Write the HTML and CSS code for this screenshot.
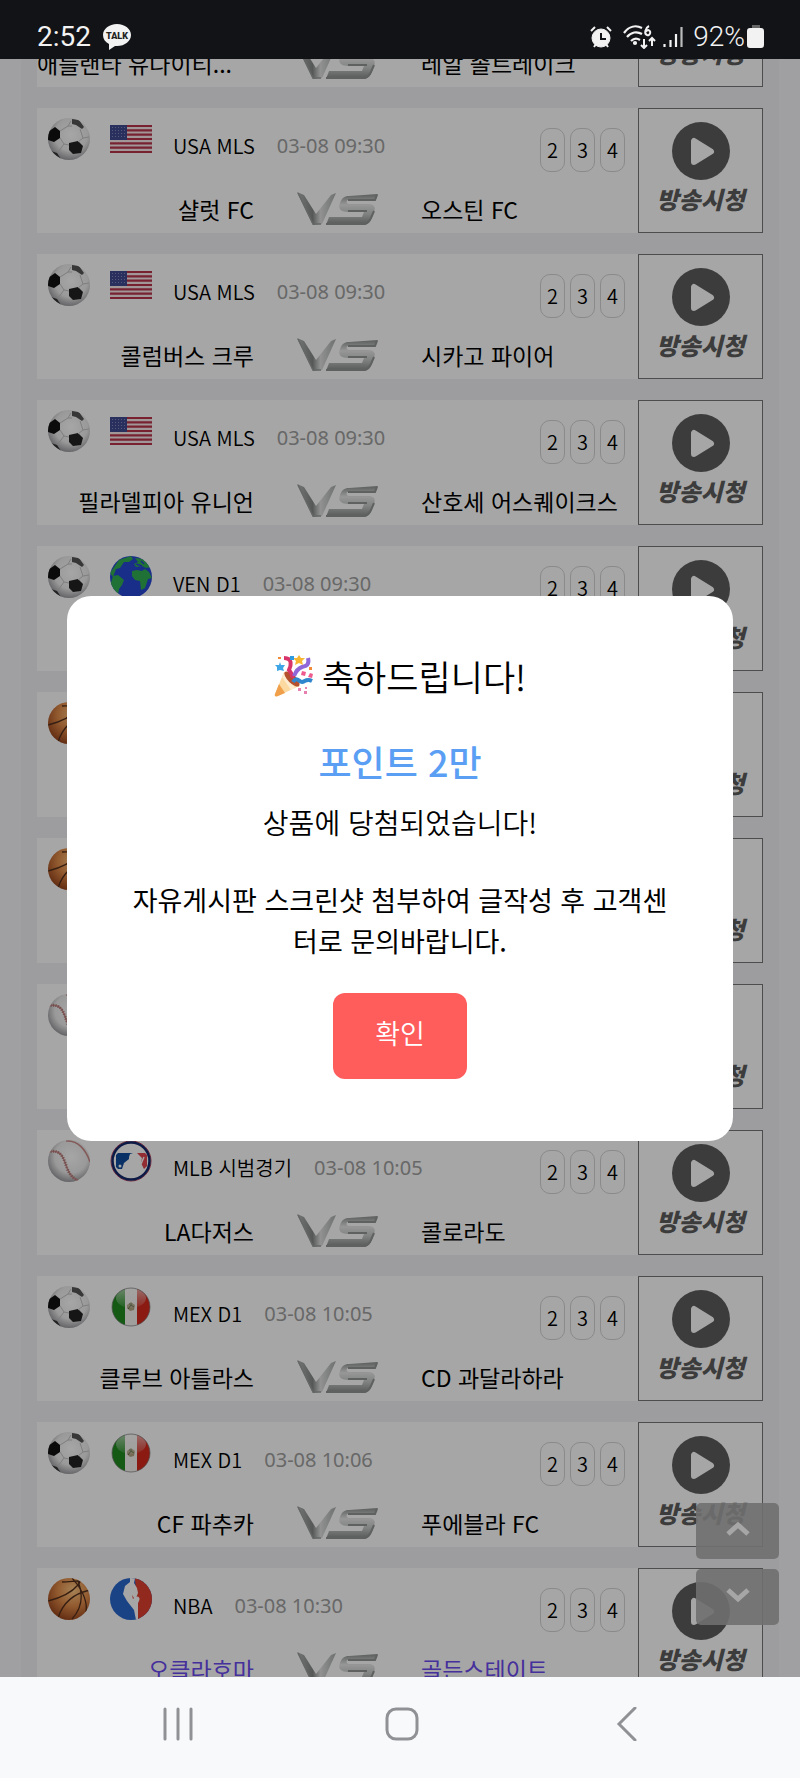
FILE: index.html
```html
<!DOCTYPE html>
<html lang="ko">
  <head>
    <meta charset="UTF-8" />
    <meta name="viewport" content="width=device-width, initial-scale=1.0" />
    <title>경기 목록</title>
    <link rel="stylesheet" href="styles.css" />
  </head>
  <body>
    <svg class="sprite" aria-hidden="true">
      <defs>
        <radialGradient id="g-white" cx="55%" cy="40%" r="65%">
          <stop offset="0" stop-color="#fff" />
          <stop offset="0.6" stop-color="#ececec" />
          <stop offset="1" stop-color="#8c8c92" />
        </radialGradient>
        <radialGradient id="g-orange" cx="60%" cy="30%" r="75%">
          <stop offset="0" stop-color="#ffc983" />
          <stop offset="0.5" stop-color="#e08a48" />
          <stop offset="1" stop-color="#93401a" />
        </radialGradient>
        <linearGradient id="g-vs" x1="0" y1="0" x2="0" y2="1">
          <stop offset="0" stop-color="#8b8e8e" />
          <stop offset="0.35" stop-color="#e8e8e8" />
          <stop offset="0.65" stop-color="#c4c6c6" />
          <stop offset="1" stop-color="#858888" />
        </linearGradient>
        <linearGradient id="g-v" x1="0" y1="0" x2="1" y2="0">
          <stop offset="0" stop-color="#b3b6b6" />
          <stop offset="0.4" stop-color="#858888" />
          <stop offset="0.6" stop-color="#e0e0e0" />
          <stop offset="1" stop-color="#a9acac" />
        </linearGradient>
        <linearGradient id="g-shine" x1="0" y1="0" x2="0" y2="1">
          <stop offset="0" stop-color="#fff" stop-opacity="0.6" />
          <stop offset="1" stop-color="#fff" stop-opacity="0.1" />
        </linearGradient>
        <clipPath id="c-ball"><circle cx="21" cy="21" r="21" /></clipPath>
        <clipPath id="c-small"><circle cx="21" cy="21" r="19" /></clipPath>
      </defs>
      <symbol id="soccer" viewBox="0 0 42 42">
        <g clip-path="url(#c-ball)">
          <rect width="42" height="42" fill="url(#g-white)" />
          <path d="M24 1l7 1 5 7-2 2-6-4-4-1z" fill="#555" />
          <path d="M0 14l7-5 5 4 0 7-6 4-6-2z" fill="#111" />
          <path d="M21 25l9-2 5 5-2 7-8 1-4-4z" fill="#222" />
          <path d="M3 33l6 2 4 6-10-4z" fill="#333" />
          <path d="M12 13l8-5 4 0M20 8l3-5M12 20l4 6 5 1M16 26l-6 8M32 11l3 9-5 4M35 20l6-1" fill="none" stroke="#c2c2c4" />
        </g>
      </symbol>
      <symbol id="basket" viewBox="0 0 42 42">
        <g clip-path="url(#c-ball)">
          <rect width="42" height="42" fill="url(#g-orange)" />
          <path d="M0 23C12 20 24 14 30 7S26 4 14 4M10 40C14 27 24 16 42 12M24 0C32 8 40 22 38 34M24 41C34 30 36 18 30 3" fill="none" stroke="#54301c" stroke-width="1.3" />
        </g>
      </symbol>
      <symbol id="baseball" viewBox="0 0 42 42">
        <g clip-path="url(#c-ball)">
          <rect width="42" height="42" fill="url(#g-white)" />
          <path d="M0 12C14 8 16 20 19 28S26 39 31 41M18 1C30 0 38 10 42 22" fill="none" stroke="#c98a88" stroke-width="1.5" />
          <path d="M0 12C14 8 16 20 19 28S26 39 31 41" fill="none" stroke="#b07a78" stroke-width="3" stroke-dasharray="1 1.5" />
        </g>
      </symbol>
      <symbol id="usa" viewBox="0 0 42 42">
        <rect y="7" width="42" height="28" fill="#f7e9ea" />
        <path d="M0 8h42M0 12.400h42M0 16.700h42M0 21h42M0 25.300h42M0 29.600h42M0 34h42" stroke="#b8354c" stroke-width="2.200" />
        <rect y="7" width="17" height="15" fill="#3f4a91" />
        <path d="M2 9.500h14M2 12.500h14M2 15.500h14M2 18.500h14" stroke="#8489bd" stroke-width="1" stroke-dasharray="1 2" />
      </symbol>
      <symbol id="globe" viewBox="0 0 42 42">
        <g clip-path="url(#c-ball)">
          <rect width="42" height="42" fill="#2748d2" />
          <path d="M9 4l12-4 2 3-4 3-5 0-4 6-4 1-3 8-3-4zM3 20l5-1 6 5-2 5-3 4-1 6-8-9zM22 15l5-1 5 1 3-2 4 3 3 6-4 1-3 9-4 2-1-9-5-1-3-4zM25 2l9 1 7 8-5 1-4-2-6 1-2-3 4-2z" fill="#30ae52" />
          <path d="M26 8l6 2M31 5l3 3" stroke="#2748d2" stroke-width="1.500" />
        </g>
      </symbol>
      <symbol id="mlb" viewBox="0 0 42 42">
        <circle cx="21" cy="21" r="20" fill="#fff" stroke="#c4455c" />
        <circle cx="21" cy="21" r="18.500" fill="#fff" stroke="#15296b" stroke-width="2.500" />
        <path d="M8 13h15l-3 1-1 3 0 2-5 4-2 6H8l-2-2V15z" fill="#0e4c9c" />
        <path d="M27 13h8l2 2v11l-3 3-3-6 1-5z" fill="#e0454f" />
        <path d="M34 17l-3 7" stroke="#fff" stroke-width="1.500" />
        <circle cx="10" cy="26" r="1.500" fill="#fff" />
      </symbol>
      <symbol id="mexico" viewBox="0 0 42 42">
        <g clip-path="url(#c-small)">
          <rect width="42" height="42" fill="#f6f4f2" />
          <rect width="15" height="42" fill="#1f8a1f" />
          <rect x="27" width="15" height="42" fill="#d4281c" />
          <path d="M17 19l4-3 4 3-1 5-4 1-3-3z" fill="#b5a685" />
          <path d="M18 23l3-4 3 2M19 18l3 0" fill="none" stroke="#556a3a" />
          <ellipse cx="21" cy="12" rx="15" ry="10" fill="url(#g-shine)" />
        </g>
        <circle cx="21" cy="21" r="19" fill="none" stroke="#777" stroke-opacity="0.7" />
      </symbol>
      <symbol id="nba" viewBox="0 0 42 42">
        <g clip-path="url(#c-ball)">
          <rect width="42" height="42" fill="#2867cc" />
          <path d="M25 0h17v42H28z" fill="#df3f30" />
          <path d="M20 0h5l-1 5 3 5 1 5-2 5 3 3-1 2 0 17-2 0-2-10-7-9-4-7 2-8 5-4z" fill="#fff" />
          <path d="M22 17l2 3-1 1z" fill="#df3f30" />
          <circle cx="27" cy="21" r="2.500" fill="#fff" />
        </g>
      </symbol>
      <symbol id="vs" viewBox="0 0 83 35">
        <path d="M1 0l7 3 12 19L35 3l5-2-14 31-9 1z" fill="url(#g-v)" />
        <path d="M2 1l15 31 8 0" fill="none" stroke="#9b9e9e" stroke-width="1.500" />
        <path d="M82 2l-3 6H52c-2 0-2 4 1 4h19c6 0 8 3 6 8l-3 8c-2 4-5 5-9 5H30l3-8h33l2-5H52c-8 0-10-4-8-9s4-7 9-7z" fill="url(#g-vs)" />
        <path d="M81 3l-2 5H52M30 32h37c4 0 6-2 8-6l3-7M52 19h19" fill="none" stroke="#929595" stroke-width="2" />
      </symbol>
      <symbol id="play" viewBox="0 0 58 58">
        <circle cx="29" cy="29" r="29" fill="#5d5d5d" />
        <path d="M22 19v21l17-10.500z" fill="#fff" stroke="#fff" stroke-width="6" stroke-linejoin="round" />
      </symbol>
    </svg>

    <header class="status">
      <div class="status-side">
        <span class="clock">2:52</span>
        <svg class="talk" viewBox="0 0 28 26">
          <path d="M14 0C6 0 0 5 0 11c0 4 2 7 6 9l0 6 6-4h2c8 0 14-5 14-11S22 0 14 0z" fill="#f2f2f2" />
          <text class="talk-text" x="14" y="15" text-anchor="middle">TALK</text>
        </svg>
      </div>
      <div class="status-side">
        <svg class="ic-alarm" viewBox="0 0 22 22" fill="none" stroke="#f2f2f2">
          <circle cx="11" cy="12" r="9" fill="#f2f2f2" />
          <path d="M1 5l4-4M21 5l-4-4M4 21l2-3M18 21l-2-3" stroke-width="2" />
          <path d="M11 7v6h5" stroke="#111317" stroke-width="2" />
        </svg>
        <svg class="ic-wifi" viewBox="0 0 34 24" fill="none" stroke="#f2f2f2" stroke-width="2.200">
          <path d="M1 8C6 1 13 0 19 3M4 12c4-5 10-6 15-3M8 16c3-3 6-3 9-1" />
          <circle cx="12" cy="18" r="1" />
          <path d="M26 1c-4 2-5 8-2 9s5-4 1-5l-3 2" stroke-width="2" />
          <path d="M21 14v9M18 20l3 3 3-3M29 21v-8M26 16l3-3 3 3" stroke-width="2" />
        </svg>
        <svg class="ic-signal" viewBox="0 0 20 22" stroke="#f2f2f2" stroke-width="2.200">
          <path d="M1.500 18v3M7.500 14v7M13 8v13" />
          <path d="M18.500 1v20" stroke="#bbb" />
        </svg>
        <span class="percent">92%</span>
        <svg class="ic-battery" viewBox="0 0 17 24">
          <rect x="5" width="8" height="5" fill="#666" />
          <rect y="3" width="17" height="20" rx="3" fill="#f2f2f2" />
        </svg>
      </div>
    </header>

    <main class="stage">
      <div class="board">
        <ul class="list"></ul>
      </div>
      <div class="scroll-btns">
        <button class="scroll-btn up" aria-label="위로">
          <svg viewBox="0 0 24 16"><path d="M2 13L12 4l10 9" /></svg>
        </button>
        <button class="scroll-btn down" aria-label="아래로">
          <svg viewBox="0 0 24 16"><path d="M2 3l10 9 10-9" /></svg>
        </button>
      </div>
      <div class="dim">
        <div class="modal" role="dialog" aria-labelledby="modal-title">
          <h2 class="modal-title" id="modal-title">
            <svg class="party" viewBox="0 0 40 42" aria-hidden="true">
              <path d="M10 17L1 39c-1 2 1 3 3 2l21-10z" fill="#fbd9a0" />
              <path d="M5 29l6 9-7 3c-2 1-4 0-3-2z" fill="#f0a04b" />
              <path d="M8 22l9 13 4-2L10 17z" fill="#fdeccf" />
              <ellipse cx="18" cy="24" rx="4" ry="10" transform="rotate(-46 18 24)" fill="#b5502e" />
              <path d="M10 3c9 0 7 8 5 12 3 4 4 6 3 8" fill="none" stroke="#d8356b" stroke-width="4" />
              <path d="M34 3c2 8-3 8-6 9s-6 4-8 9" fill="none" stroke="#9067d8" stroke-width="4" />
              <path d="M19 27c4-6 6 0 9 0s4-4 10-1" fill="none" stroke="#2f86cc" stroke-width="4" />
              <path d="M25 0l2 3 4 0-3 3 1 4-4-2-4 2 1-4-3-3 4 0z" fill="#f7b733" />
              <path d="M6 7l1 3 4 0-2 3 1 3-4-1-3 1 0-4-2-2 4 0z" fill="#3ea6e6" />
              <path d="M16 1h4v4h-4z" fill="#2f9be0" />
              <path d="M28 16l4 1-1 4-4-1zM36 18l3 1-1 4-4-1z" fill="#ee5a8d" />
              <path d="M4 2h3v2H4zM35 12h3v3h-3z" fill="#f28a3c" />
              <path d="M24 33h3v3h-3zM31 32h2v2h-2zM30 36h3v3h-3z" fill="#e77fb0" />
            </svg>
            축하드립니다!
          </h2>
          <strong class="prize">포인트 2만</strong>
          <p class="won">상품에 당첨되었습니다!</p>
          <p class="notice">자유게시판 스크린샷 첨부하여 글작성 후 고객센터로 문의바랍니다.</p>
          <button class="ok">확인</button>
        </div>
      </div>
    </main>

    <nav class="navbar">
      <button class="nav-btn" aria-label="최근 앱">
        <svg viewBox="0 0 34 34"><path d="M4 2v30M17 2v30M30 2v30" /></svg>
      </button>
      <button class="nav-btn" aria-label="홈">
        <svg viewBox="0 0 34 34"><rect x="2" y="2" width="30" height="30" rx="9" /></svg>
      </button>
      <button class="nav-btn" aria-label="뒤로">
        <svg viewBox="0 0 34 34"><path d="M26 1L10 17l16 16" /></svg>
      </button>
    </nav>

    <script>
      const board = document.querySelector('.board');
      const list = document.querySelector('.list');
      const dim = document.querySelector('.dim');
      const ok = document.querySelector('.ok');
      const up = document.querySelector('.up');
      const down = document.querySelector('.down');

      const matches = [
        ['soccer', 'usa', '', '', '애틀랜타 유나이티...', '레알 솔트레이크', 'long'],
        ['soccer', 'usa', 'USA MLS', '03-08 09:30', '샬럿 FC', '오스틴 FC'],
        ['soccer', 'usa', 'USA MLS', '03-08 09:30', '콜럼버스 크루', '시카고 파이어'],
        ['soccer', 'usa', 'USA MLS', '03-08 09:30', '필라델피아 유니언', '산호세 어스퀘이크스'],
        ['soccer', 'globe', 'VEN D1', '03-08 09:30', '', ''],
        ['basket', 'nba', '', '', '', ''],
        ['basket', 'nba', '', '', '', ''],
        ['baseball', 'mlb', '', '', '', ''],
        ['baseball', 'mlb', 'MLB 시범경기', '03-08 10:05', 'LA다저스', '콜로라도'],
        ['soccer', 'mexico', 'MEX D1', '03-08 10:05', '클루브 아틀라스', 'CD 과달라하라'],
        ['soccer', 'mexico', 'MEX D1', '03-08 10:06', 'CF 파추카', '푸에블라 FC'],
        ['basket', 'nba', 'NBA', '03-08 10:30', '오클라호마', '골든스테이트', 'picked'],
      ];

      matches.forEach(([ball, flag, league, date, home, away, type]) => {
        const creLi = document.createElement('li');
        creLi.className = `match ${type || ''}`;
        creLi.innerHTML = `
          <div class="info">
            <div class="info-top">
              <svg class="ball"><use href="#${ball}" /></svg>
              <svg class="flag"><use href="#${flag}" /></svg>
              <span class="league">${league}</span>
              <span class="date">${date}</span>
              <div class="channels">
                <button class="channel">2</button>
                <button class="channel">3</button>
                <button class="channel">4</button>
              </div>
            </div>
            <div class="teams">
              <span class="home">${home}</span>
              <svg class="vs"><use href="#vs" /></svg>
              <span class="away">${away}</span>
            </div>
          </div>
          <button class="watch">
            <svg class="play"><use href="#play" /></svg>
            <span class="watch-text">방송시청</span>
          </button>`;
        list.appendChild(creLi);
      });

      board.scrollTop = 97;

      ok.addEventListener('click', () => {
        dim.classList.add('hide');
      });
      up.addEventListener('click', () => {
        board.scrollTop = 0;
      });
      down.addEventListener('click', () => {
        board.scrollTop = board.scrollHeight;
      });
    </script>
  </body>
</html>
```
FILE: styles.css
```css
* {
  box-sizing: border-box;
}
body {
  display: flex;
  flex-direction: column;
  height: 100vh;
  margin: 0;
  font-family: "Noto Sans CJK KR", "Noto Sans", sans-serif;
  color: #000;
  background-color: #f6f6f9;
}
button {
  margin: 0;
  padding: 0;
  border: none;
  font-family: inherit;
  color: inherit;
  background: none;
  cursor: pointer;
}
.sprite {
  position: absolute;
  width: 0;
  height: 0;
}

/* 상단 상태바 */
.status {
  display: flex;
  flex: none;
  justify-content: space-between;
  height: 59px;
  padding: 20px 36px 0 37px;
  color: #f2f2f2;
  background-color: #111317;
}
.status-side {
  display: flex;
  align-items: center;
  height: 33px;
}
.clock,
.percent {
  font-family: Roboto, sans-serif;
  font-size: 28px;
  line-height: 33px;
}
.clock {
  font-weight: 400;
}
.percent {
  font-weight: 300;
}
.talk {
  width: 28px;
  height: 26px;
  margin-left: 12px;
}
.talk-text {
  font-family: Roboto, sans-serif;
  font-size: 9px;
  font-weight: 900;
  fill: #222;
}
.ic-alarm {
  width: 22px;
  height: 22px;
}
.ic-wifi {
  width: 34px;
  height: 24px;
  margin-left: 11px;
}
.ic-signal {
  width: 20px;
  height: 22px;
  margin: 0 10px 0 6px;
}
.ic-battery {
  width: 17px;
  height: 24px;
  margin-left: 2px;
}

/* 경기 목록 */
.stage {
  position: relative;
  flex: 1;
  min-height: 0;
}
.board {
  height: 100%;
  margin: 0 21px;
  padding: 0 16px;
  overflow: hidden;
  background-color: #f2f2f5;
}
.list {
  display: flex;
  flex-direction: column;
  gap: 21px;
  margin: 0;
  padding: 0;
  list-style: none;
}
.match {
  display: flex;
  height: 125px;
  background-color: #fff;
}
.info {
  display: flex;
  flex: 1;
  flex-direction: column;
  justify-content: space-between;
  min-width: 0;
  padding: 10px 0 6px;
}
.info-top {
  display: flex;
  align-items: flex-start;
  padding: 0 13px 0 11px;
}
.ball,
.flag {
  width: 42px;
  height: 42px;
}
.flag {
  margin: 0 21px 0 20px;
}
.league,
.date {
  padding-top: 13px;
  font-size: 20px;
  line-height: 30px;
}
.league {
  font-weight: 350;
}
.date {
  margin-left: 22px;
  font-family: "Noto Sans", sans-serif;
  color: #a0a0a0;
}
.channels {
  display: flex;
  gap: 5px;
  margin-left: auto;
  padding-top: 10px;
}
.channel {
  width: 25px;
  height: 44px;
  border: 1px solid #d4d4d4;
  border-radius: 10px;
  font-size: 20px;
  font-weight: 350;
  line-height: 40px;
}
.teams {
  display: grid;
  grid-template-columns: minmax(0, 1fr) 167px minmax(0, 1fr);
  align-items: center;
  justify-items: center;
}
.home,
.away {
  width: 100%;
  overflow: hidden;
  font-size: 23px;
  line-height: 36px;
  white-space: nowrap;
}
.home {
  text-align: right;
}
.long .home {
  text-align: left;
}
.picked .teams {
  color: #6b4af0;
}
.vs {
  width: 83px;
  height: 35px;
}
.watch {
  display: flex;
  flex-direction: column;
  align-items: center;
  width: 125px;
  padding-top: 13px;
  border: 1px solid #777;
}
.play {
  width: 58px;
  height: 58px;
}
.watch-text {
  margin-top: 3px;
  font-size: 24px;
  font-style: italic;
  font-weight: 900;
  line-height: 32px;
  color: #5d5d5d;
}
.scroll-btns {
  position: absolute;
  right: 21px;
  bottom: 52px;
  display: flex;
  flex-direction: column;
  gap: 10px;
}
.scroll-btn {
  width: 83px;
  height: 56px;
  border-radius: 5px;
  background-color: rgba(172, 172, 172, 0.9);
}
.scroll-btn svg {
  width: 24px;
  height: 16px;
  fill: none;
  stroke: #fff;
  stroke-width: 5;
}

/* 당첨 팝업 */
.dim {
  position: absolute;
  inset: 0;
  display: flex;
  align-items: center;
  justify-content: center;
  background-color: rgba(0, 0, 0, 0.35);
}
.dim.hide {
  display: none;
}
.modal {
  display: flex;
  flex-direction: column;
  align-items: center;
  width: calc(100% - 134px);
  padding: 56px 60px 62px;
  border-radius: 24px;
  text-align: center;
  background-color: #fff;
}
.modal-title {
  display: flex;
  align-items: center;
  gap: 8px;
  margin: 0 0 36px;
  font-size: 35px;
  font-weight: 350;
  line-height: 48px;
}
.party {
  width: 40px;
  height: 42px;
}
.prize {
  font-size: 36px;
  font-weight: 500;
  line-height: 50px;
  color: #5b9ff5;
}
.won {
  margin: 16px 0 37px;
  font-size: 28px;
  font-weight: 350;
  line-height: 40px;
}
.notice {
  margin: 0 0 32px;
  font-size: 27px;
  line-height: 41px;
  word-break: break-all;
}
.ok {
  width: 134px;
  height: 86px;
  padding-bottom: 6px;
  border-radius: 12px;
  font-size: 27px;
  font-weight: 350;
  color: #fff;
  background-color: #ff5c5c;
}

/* 하단 내비게이션 */
.navbar {
  display: flex;
  flex: none;
  height: 101px;
  padding: 0 62px 4px 66px;
  background-color: #f8f9fb;
}
.nav-btn {
  flex: 1;
}
.nav-btn svg {
  width: 34px;
  height: 34px;
  fill: none;
  stroke: #8f9194;
  stroke-width: 3;
  stroke-linecap: round;
}
```
